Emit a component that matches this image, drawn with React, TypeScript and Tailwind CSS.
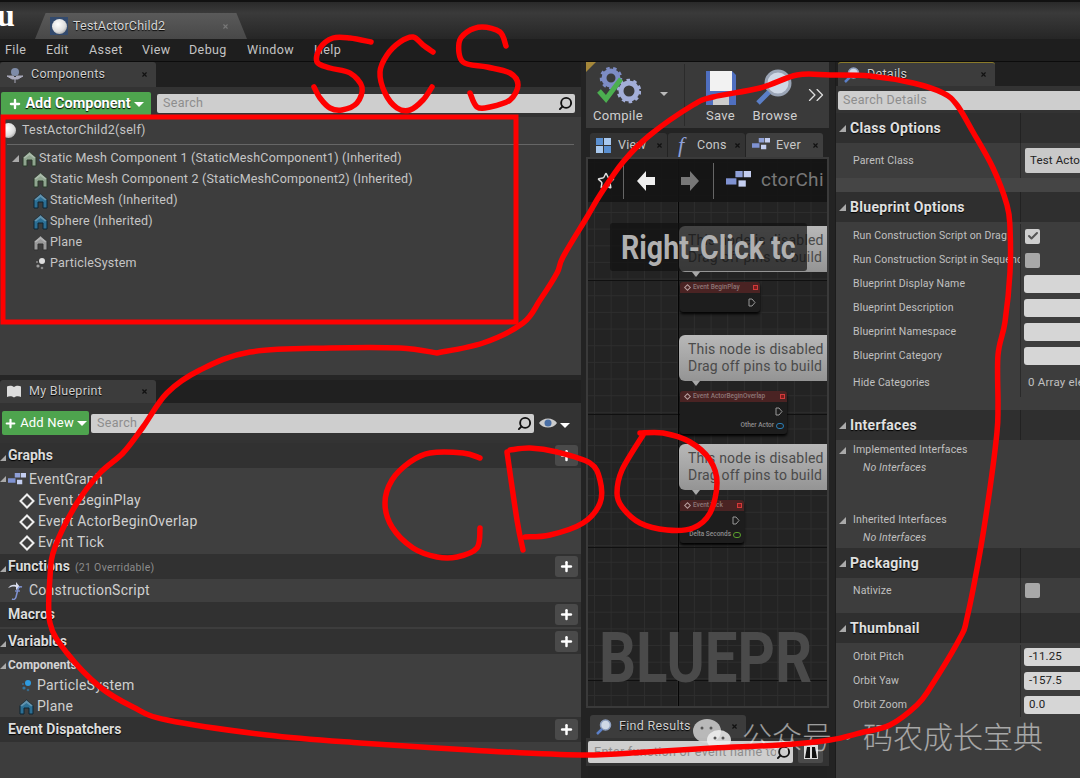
import type { ReactNode } from 'react';
import { Check, ChevronsRight, Plus, Search, Star, X } from 'lucide-react';

const FONT = 'font-["Roboto","Liberation_Sans","Noto_Sans_CJK_SC",sans-serif]';
const SHADOW = '[text-shadow:0_1px_1px_#000]';

// turns freehand points into a smooth line
const smooth = (pts: number[][]) => {
    let d = `M${pts[0][0]} ${pts[0][1]}`;
    for (let i = 0; i < pts.length - 1; i++) {
        const p0 = pts[i - 1] || pts[i];
        const p1 = pts[i];
        const p2 = pts[i + 1];
        const p3 = pts[i + 2] || p2;
        const c1x = p1[0] + (p2[0] - p0[0]) / 6;
        const c1y = p1[1] + (p2[1] - p0[1]) / 6;
        const c2x = p2[0] - (p3[0] - p1[0]) / 6;
        const c2y = p2[1] - (p3[1] - p1[1]) / 6;
        d += ` C${c1x} ${c1y} ${c2x} ${c2y} ${p2[0]} ${p2[1]}`;
    }
    return d;
};

const SCRIBBLES = [
    [[371, 42], [350, 38], [333, 38], [320, 48], [317, 62], [330, 68], [350, 73], [362, 87], [357, 103], [342, 110], [330, 108], [320, 98], [314, 87]],
    [[433, 52], [423, 45], [413, 37], [400, 42], [387, 55], [380, 72], [385, 93], [397, 108], [410, 110], [423, 100], [432, 87]],
    [[506, 46], [500, 32], [482, 27], [467, 32], [459, 43], [463, 62], [487, 67], [510, 73], [518, 85], [510, 100], [490, 107], [477, 107], [470, 93]],
    [[480, 458], [463, 453], [430, 453], [410, 462], [392, 480], [385, 503], [392, 527], [413, 548], [437, 557], [457, 557], [477, 548], [480, 528]],
    [[507, 452], [517, 520], [523, 550]],
    [[525, 537], [550, 535], [583, 523], [600, 503], [600, 480], [590, 463], [557, 452], [530, 448], [510, 450]],
    [[640, 433], [663, 433], [690, 442], [710, 460], [717, 483], [710, 513], [693, 528], [667, 530], [640, 523], [622, 507], [617, 493], [622, 470], [643, 435]],
    [[437, 353], [483, 343], [523, 323], [540, 300], [557, 273], [563, 257], [587, 217], [600, 195], [623, 162], [650, 135], [693, 105], [713, 97], [760, 88], [797, 75], [830, 75], [870, 76], [913, 83], [943, 93], [957, 105], [973, 132], [993, 168], [1007, 205], [1010, 228], [1010, 272], [1005, 322], [998, 355], [998, 405], [997, 432], [990, 488], [980, 552], [967, 618], [960, 638], [930, 688], [917, 705], [890, 725], [860, 733], [830, 740], [780, 745], [713, 748], [647, 752], [580, 755], [470, 750], [360, 743], [267, 735], [167, 720], [133, 707], [100, 687], [67, 653], [50, 623], [50, 577], [55, 547], [77, 503], [100, 473], [123, 453], [143, 427], [167, 393], [200, 370], [250, 352], [330, 348], [400, 348], [437, 353]],
];

const MeshIcon = ({ color = '#8fa58f', dark = '#2a3a2a' }: { color?: string; dark?: string }) => (
    <svg width="15" height="16" viewBox="0 0 15 16" className="shrink-0">
        <path d="M7.5 1 14 6.5V15h-4V9H5v6H1V6.5Z" fill={color} stroke={dark} strokeWidth="1" />
        <path d="M7.5 1 14 6.5 12 7.5 7.5 4 3 7.5 1 6.5Z" fill="#fff" opacity=".25" />
    </svg>
);

const ParticleIcon = ({ color = '#ddd' }: { color?: string }) => (
    <svg width="15" height="15" viewBox="0 0 15 15" className="shrink-0">
        <circle cx="9" cy="5" r="3" fill={color} />
        <circle cx="5" cy="10" r="1.6" fill={color} opacity=".6" />
        <circle cx="9" cy="12" r="1.3" fill={color} opacity=".45" />
        <circle cx="4" cy="6" r="1" fill={color} opacity=".5" />
    </svg>
);

const Ball = () => <div className="w-[15px] h-[15px] rounded-full bg-[radial-gradient(circle_at_40%_35%,#fff,#ddd_55%,#777)] shrink-0" />;

const GraphIcon = ({ w = 18 }: { w?: number }) => (
    <svg width={w} height={w * 0.75} viewBox="0 0 24 18" className="shrink-0">
        <rect x="9" y="0" width="7" height="6" fill="#8fa0d8" />
        <rect x="17" y="0" width="7" height="6" fill="#c4cef0" />
        <rect x="0" y="7" width="10" height="6" fill="#7f92d2" />
        <rect x="12" y="9" width="7" height="6" fill="#c4cef0" />
    </svg>
);

const EventDiamond = () => (
    <svg width="16" height="16" viewBox="0 0 16 16" className="shrink-0">
        <path d="M8 1.5 14.5 8 8 14.5 1.5 8Z" fill="none" stroke="#eee" strokeWidth="2" />
    </svg>
);

const LensIcon = () => (
    <svg width="16" height="16" viewBox="0 0 16 16" className="shrink-0">
        <circle cx="9.500" cy="6" r="5" fill="#cfd8e6" stroke="#8fa0c0" strokeWidth="1.500" />
        <path d="M6 10 1 15" stroke="#5b7fc7" strokeWidth="2.500" />
    </svg>
);

const Tri = ({ className = '' }: { className?: string }) => (
    <span className={`inline-block w-0 h-0 border-l-[7px] border-l-transparent border-b-[7px] border-b-[#aaa] shrink-0 ${className}`} />
);

const Caret = () => <span className="inline-block w-0 h-0 border-x-[5px] border-x-transparent border-t-[5px] border-t-white" />;

const DockTab = ({ icon, label, width, accent = false }: { icon: ReactNode; label: string; width: string; accent?: boolean }) => (
    <div className={`${width} ${accent ? 'border-t border-t-[#8a7a2a]' : ''} bg-[#3c3c3c] h-full rounded-t-[3px] flex items-center pl-[6px] pr-[8px] gap-[7px] text-[12.5px] tracking-[0.3px] text-[#cfcfcf] ${SHADOW}`}>
        {icon}
        <span className="flex-1 truncate">{label}</span>
        <X size={7} className="text-[#111]" strokeWidth={4} />
    </div>
);

const PlusButton = () => (
    <div className="w-[23px] h-[21px] rounded-[3px] bg-[#4a4a4a] flex items-center justify-center">
        <Plus size={15} strokeWidth={4} className="text-white" />
    </div>
);

const SectionRow = ({ label, extra, arrow = true }: { label: string; extra?: string; arrow?: boolean }) => (
    <div className="h-[25px] bg-[#313131] flex items-center pr-[3px]">
        <div className="w-[8px] shrink-0">{arrow && <Tri className="!border-l-[6px] !border-b-[6px]" />}</div>
        <span className={`text-[14px] font-bold text-[#dcdcdc] ${SHADOW}`}>{label}</span>
        {extra && <span className="ml-[5px] mt-[2px] text-[10.5px] tracking-[0.3px] text-[#8c8c8c]">{extra}</span>}
        <div className="flex-1" />
        <PlusButton />
    </div>
);

const TreeRow = ({ icon, label, pad = 'pl-[19px]', arrow = false }: { icon: ReactNode; label: string; pad?: string; arrow?: boolean }) => (
    <div className={`h-[21px] flex items-center gap-[3px] ${pad} text-[14px] tracking-[0.25px] text-[#cfcfcf] relative`}>
        {arrow && <Tri className="absolute left-0 top-[7px] !border-l-[6px] !border-b-[6px]" />}
        {icon}
        <span className="whitespace-nowrap">{label}</span>
    </div>
);

const CompRow = ({ icon, label, pad = 'pl-[33px]' }: { icon: ReactNode; label: string; pad?: string }) => (
    <div className={`h-[21px] flex items-center gap-[2px] ${pad} text-[12.5px] tracking-[0.2px] text-[#c6c6c6] whitespace-nowrap`}>
        {icon}
        <span>{label}</span>
    </div>
);

const DetailHeader = ({ label }: { label: string }) => (
    <div className="h-[30px] bg-[#2f2f2f] flex items-center pl-[3px] shrink-0 relative">
        <Tri className="mr-[4px]" />
        <span className={`text-[14px] font-bold tracking-[0.3px] text-[#e0e0e0] ${SHADOW}`}>{label}</span>
        <div className="absolute left-[184px] top-0 bottom-0 w-px bg-[#222]" />
    </div>
);

const DetailRow = ({ label, children, h = 'h-[24px]', className = 'items-center' }: { label: string; children?: ReactNode; h?: string; className?: string }) => (
    <div className={`${h} flex ${className} pl-[17px] text-[10.5px] tracking-[0.15px] text-[#c0c0c0] relative shrink-0`}>
        <span className="w-[167px] overflow-hidden whitespace-nowrap shrink-0">{label}</span>
        <div className="absolute left-[184px] top-0 bottom-0 w-px bg-[#2a2a2a]" />
        <div className="pl-[4px] flex-1 flex items-center">{children}</div>
    </div>
);

const Field = ({ value = '' }: { value?: string }) => (
    <div className="w-[60px] shrink-0 h-[18px] rounded-[3px] bg-[#d6d6d6] pl-[5px] flex items-center text-[11.5px] text-[#222] overflow-hidden">{value}</div>
);

const Bubble = ({ top }: { top: string }) => (
    <div className={`absolute left-[91px] w-[150px] h-[46px] ${top} rounded-l-[6px] bg-[linear-gradient(#b8b8b8,#949494)] pl-[9px] pt-[6px] text-[14px] leading-[17px] tracking-[0.2px] text-[#4a4a4a] whitespace-nowrap overflow-hidden`}>
        <div>This node is disabled</div>
        <div>Drag off pins to build</div>
    </div>
);

const BubbleTip = ({ top }: { top: string }) => (
    <div className={`absolute left-[104px] ${top} w-0 h-0 border-x-[4px] border-x-transparent border-t-[5px] border-t-[#a9a9a9]`} />
);

const EventNode = ({ top, width, title, pinLabel, pinColor }: { top: string; width: string; title: string; pinLabel?: string; pinColor?: string }) => (
    <div className={`absolute left-[92px] ${top} ${width} rounded-[3px] bg-[#1d1d1d] shadow-[0_2px_3px_#000]`}>
        <div className="h-[11px] bg-[#4a2323] rounded-t-[3px] flex items-center pl-[5px] pr-[2px] gap-[3px] text-[6.5px] font-medium text-[#8d7777] whitespace-nowrap overflow-hidden">
            <span className="w-[5px] h-[5px] rotate-45 border border-[#b79d9d] shrink-0" />
            <span className="flex-1">{title}</span>
            <span className="w-[5px] h-[5px] border border-[#d23a3a] bg-[#7a1d1d] shrink-0" />
        </div>
        <div className="h-[19px] flex items-center justify-end pr-[4px]">
            <svg width="8" height="9" viewBox="0 0 8 9"><path d="M1 1h3l3 3.500-3 3.500H1Z" fill="none" stroke="#999" /></svg>
        </div>
        {pinLabel && (
            <div className="h-[10px] mb-[3px] flex items-center justify-end gap-[2px] pr-[3px] text-[6.5px] font-medium text-[#8e8e8e] whitespace-nowrap">
                {pinLabel}
                <span className={`w-[8px] h-[6px] rounded-full border ${pinColor}`} />
            </div>
        )}
    </div>
);

const App = () => {
    return (
        <div className={`${FONT} relative w-[1080px] h-[778px] overflow-hidden bg-[#232323]`}>
            {/* title bar */}
            <div className="h-[39px] bg-[linear-gradient(#2a2a2a,#3a3a3a_30%,#262626)] flex items-end relative border-t-[2px] border-t-[#111]">
                <span className="absolute left-[-3px] top-[-2px] font-['Liberation_Serif',serif] text-[32px] font-bold leading-[30px] text-white">u</span>
                <div className="ml-[35px] w-[212px] h-[26px] bg-[linear-gradient(#5a5a5a,#484848)] [clip-path:polygon(5%_0,95%_0,100%_100%,0_100%)] flex items-center pl-[15px] pr-[18px] gap-[5px] text-[12.5px] tracking-[0.2px] text-[#d6d6d6]">
                    <div className="w-[18px] h-[18px] bg-[#334a6d] flex items-center justify-center"><Ball /></div>
                    <span className={`flex-1 ${SHADOW}`}>TestActorChild2</span>
                    <X size={7} strokeWidth={4} className="text-[#777]" />
                </div>
            </div>

            {/* menu */}
            <div className="h-[23px] bg-[#1e1e1e] border-b border-[#0c0c0c] flex items-center pl-[5px] text-[12.5px] tracking-[0.4px] text-[#c4c4c4]">
                <span className="w-[41px]">File</span>
                <span className="w-[43px]">Edit</span>
                <span className="w-[53px]">Asset</span>
                <span className="w-[47px]">View</span>
                <span className="w-[58px]">Debug</span>
                <span className="w-[67px]">Window</span>
                <span>Help</span>
            </div>

            <div className="flex h-[716px]">
                {/* left column */}
                <div className="w-[581px] shrink-0 flex flex-col">
                    <div className="h-[313px] flex flex-col bg-[#3d3d3d]">
                        <div className="h-[25px] bg-[#202020] shrink-0">
                            <DockTab width="w-[156px]" label="Components" icon={<svg width="18" height="16" viewBox="0 0 18 16" className="shrink-0"><circle cx="9" cy="5" r="4" fill="#7f8ca8" /><path d="M1 9h6l2 2 2-2h6l-5 3H6ZM9 12v4" fill="#aab" stroke="#aab" /></svg>} />
                        </div>
                        <div className="h-[30px] bg-[#333] shrink-0 flex items-start pt-[5px] pl-[1px] pr-[6px] gap-[6px]">
                            <div className={`w-[150px] h-[24px] bg-[#4ea44e] rounded-[2px] flex items-center justify-center gap-[3px] text-[14.5px] font-bold text-white ${SHADOW}`}>
                                <Plus size={14} strokeWidth={4} />
                                <span>Add Component</span>
                                <Caret />
                            </div>
                            <div className="flex-1 mt-[2px] h-[19px] bg-[#cecece] rounded-[2px] flex items-center pl-[6px] pr-[2px] text-[12.5px] tracking-[0.3px] text-[#8d8d8d]">
                                <span className="flex-1">Search</span>
                                <Search size={15} strokeWidth={3} className="text-[#111] -scale-x-100" />
                            </div>
                        </div>
                        <div className="flex-1">
                            <div className="h-[27px] flex items-center gap-[6px] pl-[2px] text-[12.5px] tracking-[0.25px] text-[#c6c6c6]">
                                <div className="w-[14px] overflow-hidden flex justify-end"><Ball /></div>
                                <span>TestActorChild2(self)</span>
                            </div>
                            <div className="mx-[7px] h-px bg-[#666] mb-[3px]" />
                            <CompRow pad="pl-[12px]" icon={<><Tri className="mr-[1px]" /><MeshIcon /></>} label="Static Mesh Component 1 (StaticMeshComponent1) (Inherited)" />
                            <CompRow icon={<MeshIcon />} label="Static Mesh Component 2 (StaticMeshComponent2) (Inherited)" />
                            <CompRow icon={<MeshIcon color="#2c6f94" dark="#0d2533" />} label="StaticMesh (Inherited)" />
                            <CompRow icon={<MeshIcon color="#2c6f94" dark="#0d2533" />} label="Sphere (Inherited)" />
                            <CompRow icon={<MeshIcon color="#9a9a9a" dark="#333" />} label="Plane" />
                            <CompRow icon={<ParticleIcon />} label="ParticleSystem" />
                        </div>
                    </div>

                    <div className="h-[5px] bg-[#262626] shrink-0" />

                    <div className="flex-1 flex flex-col bg-[#3d3d3d]">
                        <div className="h-[23px] bg-[#202020] shrink-0">
                            <DockTab width="w-[156px]" label="My Blueprint" icon={<svg width="16" height="13" viewBox="0 0 16 13" className="shrink-0"><path d="M8 2C6 .5 3 .5 1 1.500V12c2-1 5-1 7 .5 2-1.500 5-1.500 7-.5V1.500C13 .5 10 .5 8 2Z" fill="#ddd" /></svg>} />
                        </div>
                        <div className="h-[40px] bg-[#333] shrink-0 flex items-center pl-[2px] pr-[8px]">
                            <div className="w-[87px] h-[24px] bg-[#4ea44e] rounded-[2px] flex items-center justify-center gap-[3px] text-[13px] tracking-[0.2px] text-white">
                                <Plus size={13} strokeWidth={4} />
                                <span>Add New</span>
                                <Caret />
                            </div>
                            <div className="ml-[2px] w-[443px] h-[19px] bg-[#cecece] rounded-[2px] flex items-center pl-[6px] pr-[2px] text-[12.5px] tracking-[0.3px] text-[#8d8d8d]">
                                <span className="flex-1">Search</span>
                                <Search size={15} strokeWidth={3} className="text-[#111] -scale-x-100" />
                            </div>
                            <svg width="20" height="12" viewBox="0 0 20 12" className="ml-[4px]"><path d="M1 6c4-6 14-6 18 0-4 6-14 6-18 0Z" fill="#ccc" /><circle cx="10" cy="6" r="3.500" fill="#4a6fa5" /></svg>
                            <span className="ml-[2px]"><Caret /></span>
                        </div>
                        <SectionRow label="Graphs" />
                        <div className="h-[86px] bg-[#3f3f3f] pt-[1px]">
                            <TreeRow arrow icon={<GraphIcon />} label="EventGraph" pad="pl-[8px]" />
                            <TreeRow icon={<EventDiamond />} label="Event BeginPlay" />
                            <TreeRow icon={<EventDiamond />} label="Event ActorBeginOverlap" />
                            <TreeRow icon={<EventDiamond />} label="Event Tick" />
                        </div>
                        <SectionRow label="Functions" extra="(21 Overridable)" />
                        <div className="h-[23px] bg-[#3f3f3f] pt-[1px]">
                            <TreeRow
                                pad="pl-[8px]"
                                icon={
                                    <svg width="18" height="18" viewBox="0 0 18 18" className="shrink-0">
                                        <path d="M0 6c2-3 5-4 8-3V0l4 5-4 3V5C5 4 3 5 0 6Z" fill="#d8dcec" />
                                        <path d="M14 5c-3-1-4 1-4.500 4L8 15c-.5 2-2 3-4 2" fill="none" stroke="#7f92d2" strokeWidth="1.500" />
                                        <path d="M7 9h5" stroke="#7f92d2" strokeWidth="1.300" />
                                    </svg>
                                }
                                label="ConstructionScript"
                            />
                        </div>
                        <SectionRow label="Macros" arrow={false} />
                        <div className="h-[2px] bg-[#3d3d3d]" />
                        <SectionRow label="Variables" />
                        <div className="h-[63px] bg-[#3f3f3f]">
                            <div className="h-[21px] flex items-center text-[12px] font-bold text-[#d4d4d4]"><span className="w-[8px]"><Tri className="!border-l-[6px] !border-b-[6px]" /></span>Components</div>
                            <TreeRow icon={<ParticleIcon color="#2f9be0" />} label="ParticleSystem" />
                            <TreeRow icon={<MeshIcon color="#2c6f94" dark="#0d2533" />} label="Plane" />
                        </div>
                        <SectionRow label="Event Dispatchers" arrow={false} />
                    </div>
                </div>

                {/* middle column */}
                <div className="ml-[5px] w-[243px] shrink-0 flex flex-col">
                    <div className="h-[66px] bg-[#3a3a3a] shrink-0 flex relative text-[13px] tracking-[0.3px] text-[#cfcfcf]">
                        <div className="absolute left-0 top-0 w-0 h-0 border-r-[10px] border-r-transparent border-t-[10px] border-t-[#a5873a]" />
                        <div className="w-[64px] flex flex-col items-center pt-[5px]">
                            <svg width="46" height="38" viewBox="0 0 46 38">
                                <circle cx="16" cy="11" r="7" fill="none" stroke="#7d8cc4" strokeWidth="5" />
                                <circle cx="16" cy="11" r="10" fill="none" stroke="#7d8cc4" strokeWidth="2.500" strokeDasharray="3.500 3.500" />
                                <circle cx="34" cy="24" r="8" fill="none" stroke="#a3aed8" strokeWidth="5" />
                                <circle cx="34" cy="24" r="11" fill="none" stroke="#a3aed8" strokeWidth="2.500" strokeDasharray="3.500 3.500" />
                                <path d="M4 24l7 8L26 12" fill="none" stroke="#4caf50" strokeWidth="5" />
                            </svg>
                            <span className="mt-[1px]">Compile</span>
                        </div>
                        <div className="w-[34px] pt-[30px] pl-[10px]"><span className="block w-0 h-0 border-x-[4px] border-x-transparent border-t-[4px] border-t-[#bbb]" /></div>
                        <div className="w-px bg-[#2b2b2b] my-[2px]" />
                        <div className="w-[71px] flex flex-col items-center pt-[8px]">
                            <svg width="32" height="36" viewBox="0 0 32 36" className="shrink-0"><path d="M1 1h26l4 4v30H1Z" fill="#4f6fc0" /><rect x="5" y="1" width="22" height="20" fill="#f2f2f2" /><rect x="8" y="26" width="16" height="9" fill="#ccc" /></svg>
                            <span>Save</span>
                        </div>
                        <div className="w-[38px] flex flex-col items-center pt-[6px] whitespace-nowrap">
                            <svg width="38" height="38" viewBox="0 0 38 38" className="shrink-0"><circle cx="22" cy="15" r="12" fill="#cfd8e6" stroke="#9aa4b5" strokeWidth="3" /><path d="M13 24 2 35" stroke="#5b7fc7" strokeWidth="5" /></svg>
                            <span>Browse</span>
                        </div>
                        <ChevronsRight size={26} strokeWidth={1.2} className="absolute left-[217px] top-[20px] text-[#ddd]" />
                    </div>
                    <div className="h-[5px] shrink-0" />
                    <div className="h-[24px] shrink-0 flex pl-[4px] gap-[1px] text-[12.5px] tracking-[0.3px] text-[#c8c8c8]">
                        <div className="w-[77px] bg-[#333] rounded-t-[3px] flex items-center gap-[7px] pl-[6px] pr-[4px]">
                            <div className="w-[15px] h-[15px] grid grid-cols-2 gap-px shrink-0"><span className="bg-[#5a8fd0]" /><span className="bg-[#a9c9ef]" /><span className="bg-[#a9c9ef]" /><span className="bg-[#5a8fd0]" /></div>
                            <span className="flex-1 overflow-hidden whitespace-nowrap">View</span>
                            <X size={7} strokeWidth={4} className="text-[#111] shrink-0" />
                        </div>
                        <div className="w-[77px] bg-[#333] rounded-t-[3px] flex items-center gap-[5px] pl-[10px] pr-[4px]">
                            <span className="w-[14px] font-['Liberation_Serif',serif] italic text-[22px] leading-[20px] text-[#8fa0d8]">f</span>
                            <span className="flex-1 overflow-hidden whitespace-nowrap">Cons</span>
                            <X size={7} strokeWidth={4} className="text-[#111] shrink-0" />
                        </div>
                        <div className="w-[77px] bg-[#3f3f3f] rounded-t-[3px] flex items-center gap-[6px] pl-[6px] pr-[4px]">
                            <GraphIcon />
                            <span className="flex-1 overflow-hidden whitespace-nowrap">Ever</span>
                            <X size={7} strokeWidth={4} className="text-[#111] shrink-0" />
                        </div>
                    </div>

                    {/* graph canvas, nodes keep their canvas position */}
                    <div className="h-[551px] shrink-0 border-2 border-[#3a3a3a] relative overflow-hidden bg-[#232323] bg-[linear-gradient(#2d2d2d_1px,transparent_1px),linear-gradient(90deg,#2d2d2d_1px,transparent_1px)] bg-[size:16.67px_16.67px] bg-[position:6px_3px]">
                        <div className="absolute left-0 right-0 top-[121px] h-px bg-[#101010]" />
                        <div className="absolute left-0 right-0 top-[255px] h-px bg-[#101010]" />
                        <div className="absolute left-0 right-0 top-[388px] h-px bg-[#101010]" />
                        <div className="absolute left-0 right-0 top-[521px] h-px bg-[#101010]" />
                        <div className="absolute left-[90px] top-0 bottom-0 w-px bg-[#050505]" />

                        <div className="absolute left-0 right-0 top-0 h-[43px] bg-[#141414]/90 flex items-center pl-[9px] overflow-hidden">
                            <Star size={18} className="text-[#ddd] shrink-0" />
                            <div className="w-px h-[36px] bg-[#666] ml-[8px] shrink-0" />
                            <svg width="18" height="20" viewBox="0 0 18 20" className="ml-[13px] shrink-0"><path d="M9 0v6h9v8H9v6L0 10Z" fill="#eee" /></svg>
                            <svg width="18" height="20" viewBox="0 0 18 20" className="ml-[26px] shrink-0"><path d="M9 0v6H0v8h9v6l9-10Z" fill="#777" /></svg>
                            <div className="w-px h-[36px] bg-[#666] ml-[14px] shrink-0" />
                            <span className="ml-[12px] shrink-0"><GraphIcon w={25} /></span>
                            <span className="ml-[10px] text-[19px] tracking-[0.3px] text-[#777] whitespace-nowrap">ctorChi</span>
                        </div>

                        <Bubble top="top-[67px]" />
                        <div className="absolute left-[22px] top-[64px] w-[197px] h-[48px] rounded-[3px] bg-[#111]/70 flex items-center pl-[11px] overflow-hidden">
                            <span className="text-[34px] font-bold text-[#b0b0b0] whitespace-nowrap scale-x-[0.84] origin-left">Right-Click tc</span>
                        </div>
                        <BubbleTip top="top-[113px]" />
                        <EventNode top="top-[123px]" width="w-[80px]" title="Event BeginPlay" />

                        <Bubble top="top-[176px]" />
                        <BubbleTip top="top-[222px]" />
                        <EventNode top="top-[232px]" width="w-[107px]" title="Event ActorBeginOverlap" pinLabel="Other Actor" pinColor="border-[#2a7fb8]" />

                        <Bubble top="top-[285px]" />
                        <BubbleTip top="top-[331px]" />
                        <EventNode top="top-[341px]" width="w-[64px]" title="Event Tick" pinLabel="Delta Seconds" pinColor="border-[#5aa02c]" />

                        <div className="absolute left-[11px] top-[464px] text-[70px] font-bold leading-[70px] text-[#4a4a4a] whitespace-nowrap scale-x-[0.83] origin-left">BLUEPR</div>
                    </div>

                    <div className="h-[7px] shrink-0" />
                    <div className="h-[23px] shrink-0 pl-[4px]">
                        <DockTab width="w-[156px]" label="Find Results" icon={<LensIcon />} />
                    </div>
                    <div className="h-[28px] shrink-0 bg-[#333] flex items-center pl-[2px] gap-[5px]">
                        <div className="w-[205px] h-[22px] bg-[#cecece] rounded-[2px] flex items-center pl-[6px] pr-[2px] text-[12.5px] tracking-[0.3px] text-[#8d8d8d] overflow-hidden whitespace-nowrap">
                            <span className="flex-1 overflow-hidden">Enter function or event name to</span>
                            <Search size={15} strokeWidth={3} className="text-[#111] -scale-x-100 shrink-0" />
                        </div>
                        <div className="w-[25px] h-[22px] bg-[#4a4a4a] rounded-[2px] flex items-center justify-center">
                            <svg width="16" height="16" viewBox="0 0 16 16"><rect x="1" y="1" width="14" height="14" fill="#ddd" /><path d="M2 14 4 3h3v11ZM14 14 12 3H9v11Z" fill="#111" /></svg>
                        </div>
                    </div>
                    <div className="flex-1 mx-[2px] bg-[#222]" />
                </div>

                {/* details column */}
                <div className="ml-[6px] flex-1 flex flex-col bg-[#3d3d3d] border-l border-[#1c1c1c]">
                    <div className="h-[24px] bg-[#202020] shrink-0 pl-[2px]">
                        <DockTab accent width="w-[157px]" label="Details" icon={<LensIcon />} />
                    </div>
                    <div className="h-[27px] shrink-0 flex items-start pt-[5px] pl-[2px] bg-[#333]">
                        <div className="flex-1 h-[19px] bg-[#cecece] rounded-l-[2px] flex items-center pl-[5px] text-[12.5px] tracking-[0.3px] text-[#8d8d8d]">Search Details</div>
                    </div>
                    <DetailHeader label="Class Options" />
                    <DetailRow label="Parent Class" h="h-[35px]">
                        <div className="ml-[1px] w-[60px] shrink-0 h-[25px] rounded-[2px] bg-[#c9c9c9] flex items-center pl-[5px] text-[11.5px] text-[#222] whitespace-nowrap overflow-hidden">Test Actor</div>
                    </DetailRow>
                    <div className="h-[14px] bg-[#454545] shrink-0" />
                    <DetailHeader label="Blueprint Options" />
                    <div className="h-[2px] shrink-0" />
                    <DetailRow label="Run Construction Script on Drag">
                        <div className="ml-[1px] w-[15px] h-[15px] rounded-[2px] bg-[#cfcfcf] flex items-center justify-center"><Check size={12} strokeWidth={4} className="text-[#555]" /></div>
                    </DetailRow>
                    <DetailRow label="Run Construction Script in Sequence">
                        <div className="ml-[1px] w-[15px] h-[15px] rounded-[2px] bg-[#a8a8a8]" />
                    </DetailRow>
                    <DetailRow label="Blueprint Display Name"><Field /></DetailRow>
                    <DetailRow label="Blueprint Description"><Field /></DetailRow>
                    <DetailRow label="Blueprint Namespace"><Field /></DetailRow>
                    <DetailRow label="Blueprint Category"><Field /></DetailRow>
                    <DetailRow label="Hide Categories" h="h-[29px]">
                        <span className="ml-[4px] whitespace-nowrap text-[11.5px] tracking-[0.2px]">0 Array elements</span>
                    </DetailRow>
                    <div className="h-[13px] shrink-0" />
                    <DetailHeader label="Interfaces" />
                    <div className="h-[108px] shrink-0 text-[10.5px] tracking-[0.15px] text-[#c0c0c0] pl-[3px]">
                        <div className="h-[18px] mt-[1px] flex items-center gap-[7px]"><Tri />Implemented Interfaces</div>
                        <div className="h-[18px] flex items-center pl-[24px] italic">No Interfaces</div>
                        <div className="h-[34px]" />
                        <div className="h-[18px] flex items-center gap-[7px]"><Tri />Inherited Interfaces</div>
                        <div className="h-[18px] flex items-center pl-[24px] italic">No Interfaces</div>
                    </div>
                    <DetailHeader label="Packaging" />
                    <DetailRow label="Nativize" h="h-[35px]" className="items-start pt-[5px]">
                        <div className="ml-[1px] w-[15px] h-[15px] rounded-[2px] bg-[#a8a8a8]" />
                    </DetailRow>
                    <DetailHeader label="Thumbnail" />
                    <div className="h-[2px] shrink-0" />
                    <DetailRow label="Orbit Pitch"><Field value="-11.25" /></DetailRow>
                    <DetailRow label="Orbit Yaw"><Field value="-157.5" /></DetailRow>
                    <DetailRow label="Orbit Zoom"><Field value="0.0" /></DetailRow>
                </div>
            </div>

            {/* watermark over the page */}
            <div className="absolute left-[693px] top-[716px] flex items-center text-white/55">
                <svg width="38" height="34" viewBox="0 0 38 34" className="mr-[11px]">
                    <ellipse cx="14" cy="13" rx="14" ry="12" fill="#d8d8d8" fillOpacity=".8" />
                    <ellipse cx="26" cy="22" rx="12" ry="10" fill="#eee" fillOpacity=".85" />
                    <circle cx="22" cy="20" r="1.500" fill="#555" /><circle cx="30" cy="20" r="1.500" fill="#555" />
                    <circle cx="9" cy="10" r="1.500" fill="#555" /><circle cx="18" cy="10" r="1.500" fill="#555" />
                </svg>
                <div className="flex items-center text-[30px] leading-[38px] whitespace-nowrap font-['Noto_Sans_CJK_SC',sans-serif] font-light">
                    <span>公众号</span>
                    <span className="w-[31px] text-center">·</span>
                    <span>码农成长宝典</span>
                </div>
            </div>

            {/* red pen annotation drawn over the screenshot */}
            <svg width="1080" height="778" viewBox="0 0 1080 778" className="absolute left-0 top-0 pointer-events-none" fill="none" stroke="#f00" strokeLinecap="round" strokeLinejoin="round">
                <rect x="3" y="117" width="513" height="205" strokeWidth="5" strokeLinejoin="miter" />
                {SCRIBBLES.map((pts, i) => (
                    <path key={i} d={smooth(pts)} strokeWidth="5.500" />
                ))}
            </svg>
        </div>
    );
};

export default App;
